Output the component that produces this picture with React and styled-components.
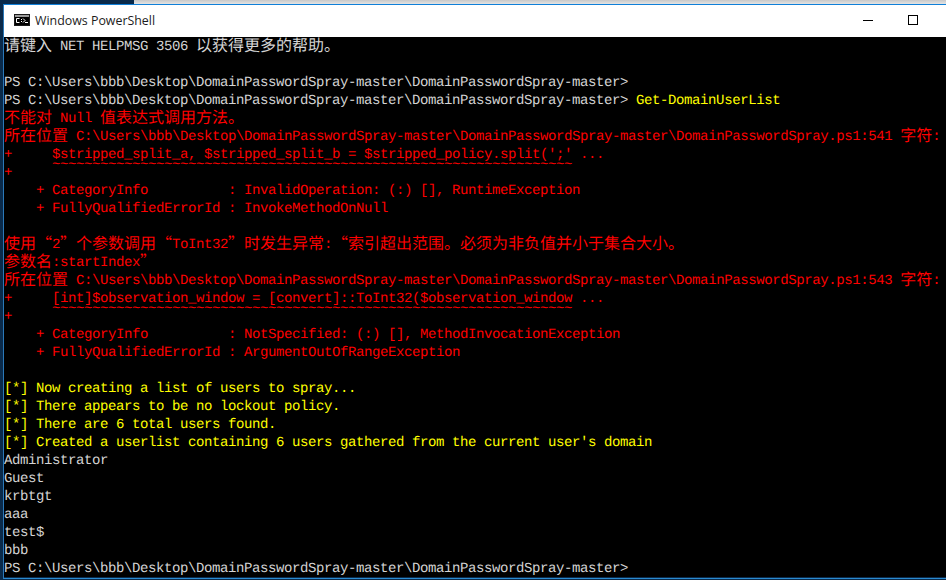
import React from 'react';
import styled, { createGlobalStyle } from 'styled-components';

const Global = createGlobalStyle`
  html, body { margin: 0; padding: 0; background: #0a2a4a; }
  body { width: 946px; height: 580px; overflow: hidden; }
`;

const Desktop = styled.div`
  width: 946px;
  height: 580px;
  display: flex;
  flex-direction: column;
  overflow: hidden;
  background: #0a2a4a;
`;

const BackWindows = styled.div`
  height: 4px;
  display: flex;
`;

const BackPiece = styled.div`
  flex: ${(p) => (p.$w ? `0 0 ${p.$w}px` : '1')};
  background: ${(p) => (p.$dark ? '#0a2a4a' : 'linear-gradient(#c8c8c8, #e4e4e4)')};
`;

const Window = styled.div`
  margin-left: 3px;
  height: 573px;
  border-top: 1px solid #0f7fd8;
  border-left: 1px solid #2a78b8;
  border-bottom: 1px solid #2a8ad0;
  display: flex;
  flex-direction: column;
`;

const TitleBar = styled.div`
  box-sizing: border-box;
  height: 32px;
  background: #fff;
  display: flex;
  align-items: center;
  padding: 0 11px 2px 10px;
`;

const TitleText = styled.span`
  margin-left: 5px;
  font: 12.4px "Open Sans", "Noto Sans", sans-serif;
  color: #1c1c1c;
  flex: 1;
`;

const WinButton = styled.div`
  width: 45px;
  height: 30px;
  display: flex;
  align-items: center;
  justify-content: center;
`;

const Minimize = styled.div`
  width: 10px;
  height: 1px;
  background: #000;
`;

const Maximize = styled.div`
  width: 8px;
  height: 8px;
  border: 1px solid #000;
`;

const Console = styled.div`
  height: 540px;
  background: #000;
  overflow: hidden;
  font-family: "Liberation Mono", monospace;
  font-size: 14px;
  letter-spacing: -0.4px;
  text-rendering: geometricPrecision;
`;

const Row = styled.div`
  box-sizing: border-box;
  height: 18px;
  padding-top: 1px;
  line-height: 18px;
  white-space: pre;
  color: ${(p) => p.$tone || '#d4d4d4'};
`;

const Cjk = styled.span`
  font-family: "Noto Sans CJK SC", sans-serif;
  font-size: 16px;
  letter-spacing: 0;
  line-height: 0;
  vertical-align: -1px;
`;

const Tildes = styled.span`
  vertical-align: 8px;
  line-height: 0;
`;

const Accent = styled.span`
  color: #ffff00;
`;

const RED = '#ff0000';
const YELLOW = '#ffff00';
const PROMPT = 'PS C:\\Users\\bbb\\Desktop\\DomainPasswordSpray-master\\DomainPasswordSpray-master>';
const SCRIPT = 'C:\\Users\\bbb\\Desktop\\DomainPasswordSpray-master\\DomainPasswordSpray-master\\DomainPasswordSpray.ps1';

const lines = [
  { text: '请键入 NET HELPMSG 3506 以获得更多的帮助。' },
  { text: '' },
  { text: PROMPT },
  { text: PROMPT, command: ' Get-DomainUserList' },
  { text: '不能对 Null 值表达式调用方法。', tone: RED },
  { text: `所在位置 ${SCRIPT}:541 字符:`, tone: RED },
  { text: "+     $stripped_split_a, $stripped_split_b = $stripped_policy.split(';' ...", tone: RED },
  { text: '+     ', tildes: 65, tone: RED },
  { text: '    + CategoryInfo          : InvalidOperation: (:) [], RuntimeException', tone: RED },
  { text: '    + FullyQualifiedErrorId : InvokeMethodOnNull', tone: RED },
  { text: '' },
  { text: '使用“2”个参数调用“ToInt32”时发生异常:“索引超出范围。必须为非负值并小于集合大小。', tone: RED },
  { text: '参数名:startIndex”', tone: RED },
  { text: `所在位置 ${SCRIPT}:543 字符:`, tone: RED },
  { text: '+     [int]$observation_window = [convert]::ToInt32($observation_window ...', tone: RED },
  { text: '+     ', tildes: 65, tone: RED },
  { text: '    + CategoryInfo          : NotSpecified: (:) [], MethodInvocationException', tone: RED },
  { text: '    + FullyQualifiedErrorId : ArgumentOutOfRangeException', tone: RED },
  { text: '' },
  { text: '[*] Now creating a list of users to spray...', tone: YELLOW },
  { text: '[*] There appears to be no lockout policy.', tone: YELLOW },
  { text: '[*] There are 6 total users found.', tone: YELLOW },
  { text: "[*] Created a userlist containing 6 users gathered from the current user's domain", tone: YELLOW },
  { text: 'Administrator' },
  { text: 'Guest' },
  { text: 'krbtgt' },
  { text: 'aaa' },
  { text: 'test$' },
  { text: 'bbb' },
  { text: PROMPT },
];

// chinese runs need 16px so they stay two cells wide next to the 8px latin
const withCjk = (text) =>
  text.split(/([\u3000-\u303f\u4e00-\u9fff\uff00-\uffef“”]+)/).map((part, i) =>
    i % 2 ? <Cjk key={i}>{part}</Cjk> : part
  );

const ShellIcon = () => (
  <svg width="16" height="12" viewBox="0 0 16 12">
    <rect x="0" y="0" width="16" height="12" fill="#1a1a1a" />
    <rect x="1" y="1" width="14" height="2" fill="#9a9a9a" />
    <rect x="1" y="3" width="14" height="8" fill="#000" />
    <path d="M5.5 4.5h-3v4h3M7.5 5v1M7.5 7v1M9 4.5l2 2-2 2M11 8.5h3" stroke="#fff" fill="none" />
  </svg>
);

const App = () => (
  <Desktop>
    <Global />
    <BackWindows>
      <BackPiece $w={134} $dark />
      <BackPiece />
    </BackWindows>
    <Window>
      <TitleBar>
        <ShellIcon />
        <TitleText>Windows PowerShell</TitleText>
        <WinButton><Minimize /></WinButton>
        <WinButton><Maximize /></WinButton>
      </TitleBar>
      <Console>
        {lines.map((line, i) => (
          <Row key={i} $tone={line.tone}>
            {withCjk(line.text)}
            {line.tildes && <Tildes>{'~'.repeat(line.tildes)}</Tildes>}
            {line.command && <Accent>{line.command}</Accent>}
          </Row>
        ))}
      </Console>
    </Window>
  </Desktop>
);

export default App;
